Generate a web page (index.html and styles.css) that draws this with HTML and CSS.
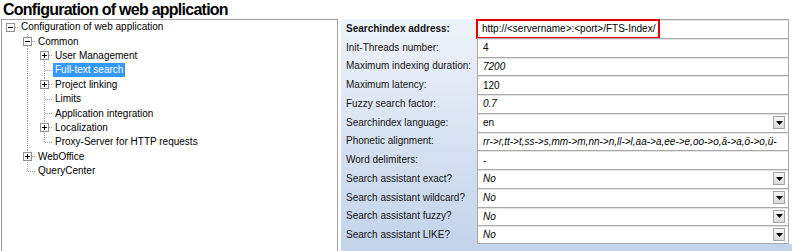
FILE: index.html
```html
<!DOCTYPE html>
<html>
  <head>
    <meta charset="UTF-8" />
    <title>Configuration of web application</title>
    <link rel="stylesheet" href="styles.css">
  </head>
  <body>
    <h1 class="title">Configuration of web application</h1>

    <div class="panes">
      <!-- navigation tree -->
      <div class="tree">
        <div class="node">
          <span class="gut hr">
            <svg class="exp" width="9" height="9" viewBox="0 0 9 9"><rect x="0.5" y="0.5" width="8" height="8" fill="#fff" stroke="#919191"/><path d="M2 4.5h5" stroke="#000"/></svg>
          </span>
          <span class="txt">Configuration of web application</span>
        </div>
        <div class="node">
          <span class="gut"></span>
          <span class="gut tee">
            <svg class="exp" width="9" height="9" viewBox="0 0 9 9"><rect x="0.5" y="0.5" width="8" height="8" fill="#fff" stroke="#919191"/><path d="M2 4.5h5" stroke="#000"/></svg>
          </span>
          <span class="txt">Common</span>
        </div>
        <div class="node">
          <span class="gut"></span>
          <span class="gut v"></span>
          <span class="gut tee">
            <svg class="exp" width="9" height="9" viewBox="0 0 9 9"><rect x="0.5" y="0.5" width="8" height="8" fill="#fff" stroke="#919191"/><path d="M2 4.5h5M4.5 2v5" stroke="#000"/></svg>
          </span>
          <span class="txt">User Management</span>
        </div>
        <div class="node">
          <span class="gut"></span>
          <span class="gut v"></span>
          <span class="gut tee"></span>
          <span class="txt selected">Full-text search</span>
        </div>
        <div class="node">
          <span class="gut"></span>
          <span class="gut v"></span>
          <span class="gut tee">
            <svg class="exp" width="9" height="9" viewBox="0 0 9 9"><rect x="0.5" y="0.5" width="8" height="8" fill="#fff" stroke="#919191"/><path d="M2 4.5h5M4.5 2v5" stroke="#000"/></svg>
          </span>
          <span class="txt">Project linking</span>
        </div>
        <div class="node">
          <span class="gut"></span>
          <span class="gut v"></span>
          <span class="gut tee"></span>
          <span class="txt">Limits</span>
        </div>
        <div class="node">
          <span class="gut"></span>
          <span class="gut v"></span>
          <span class="gut tee"></span>
          <span class="txt">Application integration</span>
        </div>
        <div class="node">
          <span class="gut"></span>
          <span class="gut v"></span>
          <span class="gut tee">
            <svg class="exp" width="9" height="9" viewBox="0 0 9 9"><rect x="0.5" y="0.5" width="8" height="8" fill="#fff" stroke="#919191"/><path d="M2 4.5h5M4.5 2v5" stroke="#000"/></svg>
          </span>
          <span class="txt">Localization</span>
        </div>
        <div class="node">
          <span class="gut"></span>
          <span class="gut v"></span>
          <span class="gut end"></span>
          <span class="txt">Proxy-Server for HTTP requests</span>
        </div>
        <div class="node">
          <span class="gut"></span>
          <span class="gut tee">
            <svg class="exp" width="9" height="9" viewBox="0 0 9 9"><rect x="0.5" y="0.5" width="8" height="8" fill="#fff" stroke="#919191"/><path d="M2 4.5h5M4.5 2v5" stroke="#000"/></svg>
          </span>
          <span class="txt">WebOffice</span>
        </div>
        <div class="node">
          <span class="gut"></span>
          <span class="gut end"></span>
          <span class="txt">QueryCenter</span>
        </div>
      </div>

      <!-- property grid -->
      <div class="props">
        <div class="prop-row">
          <div class="prop-label bold">Searchindex address:</div>
          <div class="prop-value flush"><span class="mark">http://&lt;servername&gt;:&lt;port&gt;/FTS-Index/</span></div>
        </div>
        <div class="prop-row">
          <div class="prop-label">Init-Threads number:</div>
          <div class="prop-value">4</div>
        </div>
        <div class="prop-row">
          <div class="prop-label">Maximum indexing duration:</div>
          <div class="prop-value italic">7200</div>
        </div>
        <div class="prop-row">
          <div class="prop-label">Maximum latency:</div>
          <div class="prop-value">120</div>
        </div>
        <div class="prop-row">
          <div class="prop-label">Fuzzy search factor:</div>
          <div class="prop-value italic">0.7</div>
        </div>
        <div class="prop-row">
          <div class="prop-label">Searchindex language:</div>
          <div class="prop-value"><span class="val">en</span><span class="drop"><svg width="7" height="4" viewBox="0 0 7 4"><path d="M0 0h7L3.5 4z" fill="#000"/></svg></span></div>
        </div>
        <div class="prop-row">
          <div class="prop-label">Phonetic alignment:</div>
          <div class="prop-value italic"><span class="val">rr-&gt;r,tt-&gt;t,ss-&gt;s,mm-&gt;m,nn-&gt;n,ll-&gt;l,aa-&gt;a,ee-&gt;e,oo-&gt;o,ä-&gt;a,ö-&gt;o,ü-</span></div>
        </div>
        <div class="prop-row">
          <div class="prop-label">Word delimiters:</div>
          <div class="prop-value">-</div>
        </div>
        <div class="prop-row">
          <div class="prop-label">Search assistant exact?</div>
          <div class="prop-value italic"><span class="val">No</span><span class="drop"><svg width="7" height="4" viewBox="0 0 7 4"><path d="M0 0h7L3.5 4z" fill="#000"/></svg></span></div>
        </div>
        <div class="prop-row">
          <div class="prop-label">Search assistant wildcard?</div>
          <div class="prop-value italic"><span class="val">No</span><span class="drop"><svg width="7" height="4" viewBox="0 0 7 4"><path d="M0 0h7L3.5 4z" fill="#000"/></svg></span></div>
        </div>
        <div class="prop-row">
          <div class="prop-label">Search assistant fuzzy?</div>
          <div class="prop-value italic"><span class="val">No</span><span class="drop"><svg width="7" height="4" viewBox="0 0 7 4"><path d="M0 0h7L3.5 4z" fill="#000"/></svg></span></div>
        </div>
        <div class="prop-row">
          <div class="prop-label">Search assistant LIKE?</div>
          <div class="prop-value italic"><span class="val">No</span><span class="drop"><svg width="7" height="4" viewBox="0 0 7 4"><path d="M0 0h7L3.5 4z" fill="#000"/></svg></span></div>
        </div>
      </div>
    </div>
  </body>
</html>
```

FILE: styles.css
```css
body {
  margin: 0;
  width: 792px;
  height: 251px;
  overflow: hidden;
  background: #fff;
  color: #000;
  font-family: "Liberation Sans", Arial, sans-serif;
  font-size: 10px;
}

.title {
  margin: 0;
  padding-left: 3px;
  height: 19px;
  font-size: 16px;
  font-weight: bold;
  letter-spacing: -0.75px;
  line-height: 19px;
}

.panes {
  display: flex;
  gap: 3px;
  padding-left: 1px;
}

/* tree */

.tree {
  width: 337px;
  height: 240px;
  flex: none;
  box-sizing: border-box;
  border: 1px solid #a0a0a0;
}

.node {
  display: flex;
  align-items: center;
  height: 14.4px;
}

.gut {
  width: 17px;
  height: 100%;
  flex: none;
  display: flex;
  align-items: center;
  justify-content: center;
  background-repeat: no-repeat;
}

.gut.v {
  background-image: repeating-linear-gradient(to bottom, #a0a0a0 0 1px, transparent 1px 2px);
  background-size: 1px 100%;
  background-position: center top;
}

.gut.tee {
  background-image:
    repeating-linear-gradient(to bottom, #a0a0a0 0 1px, transparent 1px 2px),
    repeating-linear-gradient(to right, #a0a0a0 0 1px, transparent 1px 2px);
  background-size: 1px 100%, 8px 1px;
  background-position: center top, right center;
}

.gut.end {
  background-image:
    repeating-linear-gradient(to bottom, #a0a0a0 0 1px, transparent 1px 2px),
    repeating-linear-gradient(to right, #a0a0a0 0 1px, transparent 1px 2px);
  background-size: 1px 50%, 8px 1px;
  background-position: center top, right center;
}

.gut.hr {
  background-image: repeating-linear-gradient(to right, #a0a0a0 0 1px, transparent 1px 2px);
  background-size: 8px 1px;
  background-position: right center;
}

.exp {
  display: block;
}

.txt {
  padding: 0 2px;
  line-height: 14px;
  white-space: nowrap;
}

.txt.selected {
  background: #3399ff;
  color: #fff;
}

/* property grid */

.props {
  flex: 1;
  height: 232px;
  background: linear-gradient(#eef3fa, #c2d3ea);
}

.prop-row {
  display: flex;
  height: 18.75px;
}

.prop-label {
  width: 131px;
  flex: none;
  padding-left: 5px;
  display: flex;
  align-items: center;
  color: #141414;
  white-space: nowrap;
}

.prop-label.bold {
  font-weight: bold;
}

.prop-value {
  flex: 1;
  min-width: 0;
  margin-right: 3px;
  padding: 0 3px 0 5px;
  display: flex;
  align-items: center;
  justify-content: space-between;
  background: #fff;
  border-top: 1px solid #a9a9a9;
  border-left: 1px solid #a9a9a9;
  border-right: 1px solid #a9a9a9;
  box-shadow: inset 0 1px 0 #e4e4e4, 3px 0 0 #fff;
  white-space: nowrap;
}

.prop-row:last-child .prop-value {
  border-bottom: 1px solid #a9a9a9;
}

.prop-value.italic {
  font-style: italic;
}

.prop-value.flush {
  padding-left: 0;
  align-items: stretch;
  justify-content: flex-start;
}

.mark {
  display: flex;
  align-items: center;
  margin: -1px 0 -1px -2px;
  padding: 0 3px 0 4px;
  border: 2px solid #e40000;
}

.drop {
  width: 12px;
  height: 13px;
  box-sizing: border-box;
  display: flex;
  align-items: center;
  justify-content: center;
  border: 1px solid #a3a3a3;
  background: linear-gradient(#f7f7f7, #dadada);
}

.drop svg {
  display: block;
}
```
